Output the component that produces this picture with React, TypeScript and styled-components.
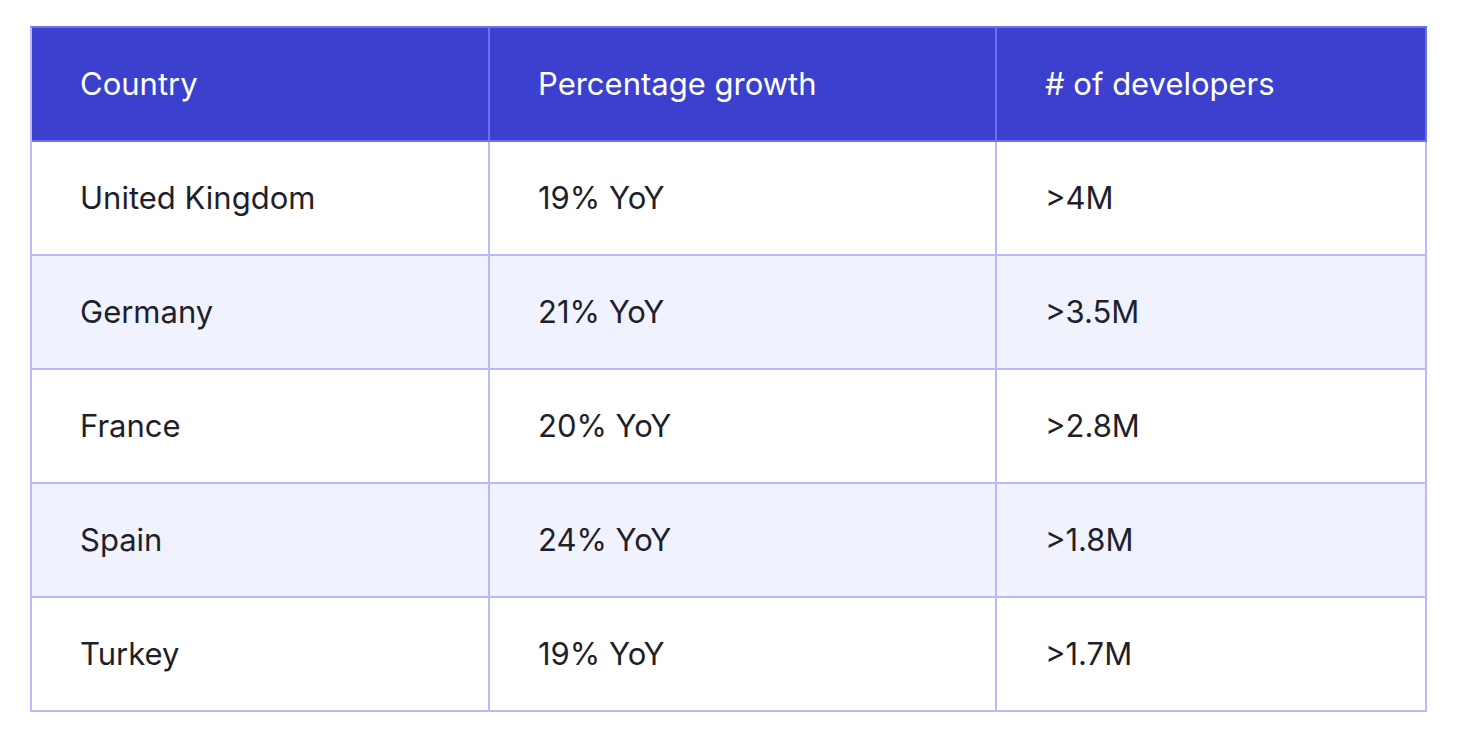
import React from "react";
import styled, { createGlobalStyle } from "styled-components";

const Global = createGlobalStyle`
  html, body { margin: 0; padding: 0; background: #ffffff; }
  body { font-family: Inter, "Noto Sans", "Liberation Sans", sans-serif; }
`;

const Page = styled.div`
  padding: 26px 0 0 30px;
`;

const Table = styled.div`
  display: grid;
  grid-template-columns: 458px 507px 430px;
  width: 1397px;
  box-sizing: border-box;
  border-left: 2px solid #b8bafc;
  border-top: 2px solid #6b70ee;
`;

const Cell = styled.div<{ $head?: boolean; $alt?: boolean }>`
  box-sizing: border-box;
  height: 114px;
  display: flex;
  align-items: center;
  padding-left: 48px;
  padding-bottom: 1px;
  border-right: 2px solid ${(p) => (p.$head ? "#6b70ee" : "#b8bafc")};
  border-bottom: 2px solid ${(p) => (p.$head ? "#6b70ee" : "#b8bafc")};
  background: ${(p) => (p.$head ? "#3c40cf" : p.$alt ? "#f0f2fe" : "#ffffff")};
  color: ${(p) => (p.$head ? "#ffffff" : "#1e1f2b")};
  font-size: 31px;
  font-weight: 400;
  letter-spacing: 0;
  font-variant-numeric: proportional-nums;
`;

const headers = ["Country", "Percentage growth", "# of developers"];
const rows = [
  ["United Kingdom", "19% YoY", ">4M"],
  ["Germany", "21% YoY", ">3.5M"],
  ["France", "20% YoY", ">2.8M"],
  ["Spain", "24% YoY", ">1.8M"],
  ["Turkey", "19% YoY", ">1.7M"],
];

export default function App() {
  return (
    <Page>
      <Global />
      <Table>
        {headers.map((h) => (
          <Cell key={h} $head>
            {h}
          </Cell>
        ))}
        {rows.map((r, ri) =>
          r.map((c, ci) => (
            <Cell key={`${ri}-${ci}`} $alt={ri % 2 === 1}>
              {c}
            </Cell>
          ))
        )}
      </Table>
    </Page>
  );
}
